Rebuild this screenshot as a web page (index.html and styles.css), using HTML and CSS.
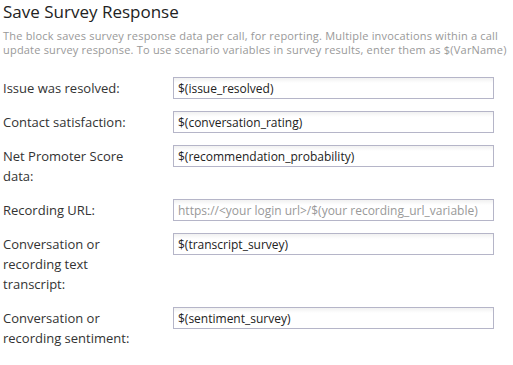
FILE: index.html
```html
<!DOCTYPE html>
<html>
<head>
    <link rel="stylesheet" href="styles.css">
</head>
<body>
    <div id="surveyBlock">
        <h1 class="blockTitle">Save Survey Response</h1>
        <p class="blockInfo">The block saves survey response data per call, for reporting. Multiple invocations within a call<br>update survey response. To use scenario variables in survey results, enter them as $(VarName)</p>

        <div class="formRows">
            <div class="formRow">
                <label class="rowLabel" for="issueResolved">Issue was resolved:</label>
                <input class="rowInput" type="text" id="issueResolved" value="$(issue_resolved)">
            </div>
            <div class="formRow">
                <label class="rowLabel" for="contactSatisfaction">Contact satisfaction:</label>
                <input class="rowInput" type="text" id="contactSatisfaction" value="$(conversation_rating)">
            </div>
            <div class="formRow">
                <label class="rowLabel" for="npsData">Net Promoter Score data:</label>
                <input class="rowInput" type="text" id="npsData" value="$(recommendation_probability)">
            </div>
            <div class="formRow">
                <label class="rowLabel" for="recordingUrl">Recording URL:</label>
                <input class="rowInput" type="text" id="recordingUrl" placeholder="https://<your login url>/$(your recording_url_variable)">
            </div>
            <div class="formRow">
                <label class="rowLabel" for="transcript">Conversation or recording text transcript:</label>
                <input class="rowInput" type="text" id="transcript" value="$(transcript_survey)">
            </div>
            <div class="formRow">
                <label class="rowLabel" for="sentiment">Conversation or recording sentiment:</label>
                <input class="rowInput" type="text" id="sentiment" value="$(sentiment_survey)">
            </div>
        </div>
    </div>
</body>
</html>
```

FILE: styles.css
```css
body, html {
    margin: 0;
    background-color: #fff;
}
#surveyBlock {
    padding: 0 3px;
    font-family: "Open Sans", "Liberation Sans", sans-serif;
    color: #333;
}
.blockTitle {
    margin: 0;
    font-size: 17px;
    font-weight: normal;
    line-height: 24px;
    color: #222;
}
.blockInfo {
    margin: 5px 0 0 0;
    font-size: 11px;
    line-height: 14px;
    letter-spacing: 0.2px;
    color: #999;
    white-space: nowrap;
}
.formRows {
    display: flex;
    flex-direction: column;
    gap: 12px;
    margin-top: 20px;
}
.formRow {
    display: flex;
    align-items: flex-start;
}
.rowLabel {
    width: 150px;
    margin-right: 20px;
    padding: 1px 0;
    font-size: 13px;
    line-height: 20px;
    color: #333;
}
.rowInput {
    box-sizing: border-box;
    width: 321px;
    height: 22px;
    margin: 0;
    padding: 0 4px;
    border: 1px solid #b5b5c8;
    border-radius: 0;
    background: linear-gradient(#f1f1f1, #fff 5px);
    font-family: "Open Sans", "Liberation Sans", sans-serif;
    font-size: 12px;
    color: #222;
    outline: none;
}
.rowInput::placeholder {
    color: #999;
}
```
